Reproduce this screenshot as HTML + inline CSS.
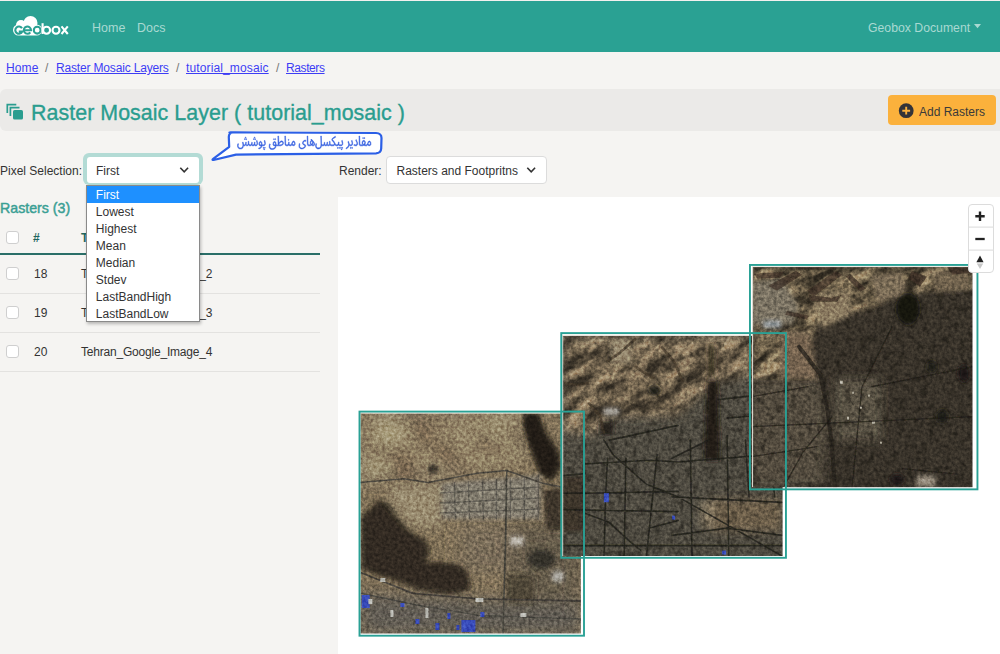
<!DOCTYPE html>
<html><head><meta charset="utf-8">
<style>
*{box-sizing:border-box;margin:0;padding:0}
html,body{width:1000px;height:654px;overflow:hidden;background:#f5f4f2;font-family:"Liberation Sans",sans-serif;font-size:12px;color:#333}
.abs{position:absolute}
#topline{left:0;top:0;width:1000px;height:1px;background:#f3f0ef}
#nav{left:0;top:1px;width:1000px;height:51px;background:#2aa193}
.navlink{color:#a9d9d2;font-size:12.5px;top:20.5px}
#crumb{top:61px;left:6px;font-size:12px;white-space:nowrap}
#crumb a{color:#3d3df5;text-decoration:underline}
#crumb .sep{color:#777;top:0}
#band{left:0;top:89px;width:1000px;height:42px;background:#ebeae8;border-radius:6px 0 0 6px}
#title{left:31px;top:100.5px;font-size:21.4px;letter-spacing:0.05px;color:#2a9d8f;white-space:nowrap;-webkit-text-stroke:0.35px #2a9d8f}
#addbtn{left:888px;top:95px;width:108px;height:30px;background:#fbb13c;border-radius:4px}
#addbtn span{position:absolute;left:31px;top:9.5px;font-size:12px;color:#3a3a3a}
.lbl{font-size:12px;color:#333;white-space:nowrap}
#sel1ring{left:83px;top:153px;width:120px;height:32px;border-radius:6px;background:#b3dbd5}
#sel1{left:87px;top:156.5px;width:112px;height:26px;background:#fff;border-radius:3px}
#sel2{left:386px;top:156px;width:161px;height:28px;background:#fff;border:1px solid #dcdcdc;border-radius:4px}
#map{left:338px;top:197px;width:662px;height:457px;background:#fff}
#rtitle{left:0;top:199.5px;font-size:14.2px;color:#3a9f94;white-space:nowrap;-webkit-text-stroke:0.45px #3a9f94}
.th{font-weight:bold;color:#1f6660}
.cb{width:13px;height:13px;border:1px solid #cfcfcf;border-radius:3px;background:#fff}
.rowb{left:0;width:320px;height:1px;background:#e3e2e0}
#dd{left:85.8px;top:185px;width:114px;height:137px;background:#fff;border:1px solid #8a8a8a;box-shadow:1px 2px 3px rgba(0,0,0,.25)}
#dd div{height:17px;line-height:19px;padding-left:9px;font-size:12px;color:#333}
#dd div.hl{background:#1e90ff;color:#fff}
#zc{left:968px;top:204px;width:26px;height:69px;background:#fff;border:1.5px solid #dcdcdc;border-radius:4px}
</style></head><body>
<div id="topline" class="abs"></div>
<div id="nav" class="abs"></div>
<svg class="abs" style="left:0;top:0" width="80" height="50" viewBox="0 0 80 50">
<g fill="#fff"><circle cx="30.5" cy="23" r="7"/><circle cx="21" cy="25" r="5"/><rect x="13" y="24.5" width="29" height="11" rx="5.5"/></g>
<g fill="none" stroke="#2aa193" stroke-width="2.1"><path d="M22 28.3 A3.6 3.6 0 1 0 22.2 31.5 L18.8 31.5"/><path d="M24.2 30.2 L31 30.2 A3.6 3.6 0 1 0 30.3 32.3"/><circle cx="37.2" cy="30.2" r="3.4"/></g>
<g fill="none" stroke="#fff" stroke-width="2.1"><path d="M42.6 23.2 V34"/><circle cx="46.6" cy="30.2" r="3.5"/><circle cx="56" cy="30.2" r="3.5"/><path d="M61.5 26.3 L67.8 34 M67.8 26.3 L61.5 34"/></g>
</svg>
<div class="abs navlink" style="left:92px">Home</div>
<div class="abs navlink" style="left:137px">Docs</div>
<div class="abs navlink" style="left:868px;font-size:12.25px">Geobox Document</div>
<svg class="abs" style="left:974px;top:24px" width="8" height="5"><path d="M0 0 L7 0 L3.5 4.2 Z" fill="#a9d9d2"/></svg>

<div id="crumb" class="abs">
<a class="abs" style="left:0px;top:0;letter-spacing:0.1px">Home</a><span class="abs sep" style="left:39px">/</span>
<a class="abs" style="left:50px;letter-spacing:-0.17px">Raster Mosaic Layers</a><span class="abs sep" style="left:170px">/</span>
<a class="abs" style="left:180px;letter-spacing:0.13px">tutorial_mosaic</a><span class="abs sep" style="left:270px">/</span>
<a class="abs" style="left:280px;letter-spacing:-0.4px">Rasters</a></div>

<div id="band" class="abs"></div>
<svg class="abs" style="left:0;top:95px" width="30" height="30" viewBox="0 95 30 30">
<g fill="none" stroke="#2a9d8f" stroke-width="1.7"><path d="M7.3 113 V104.6 H16.3"/><path d="M10.4 116 V107.6 H19.5"/></g>
<rect x="13" y="110" width="10" height="9.5" rx="1.6" fill="#2a9d8f"/>
</svg>
<div id="title" class="abs">Raster Mosaic Layer ( tutorial_mosaic )</div>
<div id="addbtn" class="abs"><span>Add Rasters</span></div>
<svg class="abs" style="left:896px;top:100px" width="22" height="22" viewBox="896 100 22 22"><circle cx="906.2" cy="110.7" r="7.4" fill="#333338"/><path d="M902.3 110.7 H910.1 M906.2 106.8 V114.6" stroke="#fbb13c" stroke-width="1.9"/></svg>

<div class="abs lbl" style="left:0;top:164px">Pixel Selection:</div>
<div id="sel1ring" class="abs"></div>
<div id="sel1" class="abs"><span class="abs" style="left:9px;top:7px">First</span></div>
<svg class="abs" style="left:176px;top:164px" width="16" height="12" viewBox="176 164 16 12"><path d="M180.3 167.8 L184.2 171.8 L188.1 167.8" fill="none" stroke="#333" stroke-width="1.6"/></svg>
<div class="abs lbl" style="left:339px;top:164px">Render:</div>
<div id="sel2" class="abs"><span class="abs" style="left:9.5px;top:7px">Rasters and Footpritns</span></div>
<svg class="abs" style="left:524px;top:164px" width="16" height="12" viewBox="524 164 16 12"><path d="M527.3 167.8 L531.2 171.8 L535.1 167.8" fill="none" stroke="#333" stroke-width="1.6"/></svg>

<div id="map" class="abs"></div>
<!--MAP-->
<svg class="abs" style="left:338px;top:197px" width="662" height="457" viewBox="338 197 662 457">
<defs>
<filter id="b1" x="-10%" y="-10%" width="120%" height="120%"><feGaussianBlur stdDeviation="0.7"/></filter>
<filter id="b2" x="-20%" y="-20%" width="140%" height="140%"><feGaussianBlur stdDeviation="2"/></filter>
<filter id="b4" x="-30%" y="-30%" width="160%" height="160%"><feGaussianBlur stdDeviation="4"/></filter>
<filter id="b8" x="-40%" y="-40%" width="180%" height="180%"><feGaussianBlur stdDeviation="8"/></filter>
<filter id="grain" x="0" y="0" width="100%" height="100%" color-interpolation-filters="sRGB"><feTurbulence type="fractalNoise" baseFrequency="0.32" numOctaves="3" seed="3"/><feColorMatrix type="matrix" values="1.5 0 0 0 -0.25  1.5 0 0 0 -0.25  1.5 0 0 0 -0.25  0 0 0 0 1"/></filter>
<filter id="blot" x="0" y="0" width="100%" height="100%" color-interpolation-filters="sRGB"><feTurbulence type="fractalNoise" baseFrequency="0.13" numOctaves="2" seed="13"/><feColorMatrix type="matrix" values="0 0 0 0 0.09  0 0 0 0 0.08  0 0 0 0 0.06  -5 0 0 0 2.35"/></filter>
<filter id="ridgeA" x="0" y="0" width="100%" height="100%" color-interpolation-filters="sRGB"><feTurbulence type="fractalNoise" baseFrequency="0.03 0.08" numOctaves="4" seed="7"/><feColorMatrix type="matrix" values="2.6 0 0 0 -0.8  2.6 0 0 0 -0.8  2.6 0 0 0 -0.8  0 0 0 0 1"/></filter>
<filter id="ridgeB" x="0" y="0" width="100%" height="100%" color-interpolation-filters="sRGB"><feTurbulence type="fractalNoise" baseFrequency="0.03 0.09" numOctaves="4" seed="21"/><feColorMatrix type="matrix" values="2.6 0 0 0 -0.8  2.6 0 0 0 -0.8  2.6 0 0 0 -0.8  0 0 0 0 1"/></filter>
<clipPath id="c0"><rect x="0" y="0" width="220.5" height="220.5"/></clipPath>
<mask id="m1"><polygon points="0,0 165,0 162,40 120,56 60,62 0,64" fill="#fff" filter="url(#b4)"/></mask>
<mask id="m2"><polygon points="0,0 221,0 221,40 190,40 155,48 116,80.6 84,82 47.3,82.5 30,100 0,96" fill="#fff" filter="url(#b4)"/></mask>
<mask id="m3"><polygon points="0,0 221,0 221,22 172.7,25.6 144,29 118,43.6 93.6,47 65,58 58,83 65,112 0,112" fill="#fff" filter="url(#b2)"/></mask>
</defs>
<g transform="translate(360.4 413)" clip-path="url(#c0)" style="isolation:isolate">
<rect x="0" y="0" width="221" height="221" fill="rgb(132,116,90)" />
<g filter="url(#b8)">
<polygon points="0,0 165,0 160,50 110,58 40,62 0,62" fill="rgb(145,128,100)" />
<polygon points="0,180 117,186 221,190 221,221 0,221" fill="rgb(100,95,86)" />
<polygon points="150,110 221,110 221,190 150,190" fill="rgb(105,95,78)" />
<polygon points="100,110 150,110 150,160 100,160" fill="rgb(125,112,92)" />
<g mask="url(#m1)" style="mix-blend-mode:overlay" opacity="0.45"><rect x="-60" y="-60" width="340" height="240" filter="url(#ridgeA)" transform="rotate(20 110 60)"/></g>
<rect width="221" height="221" filter="url(#blot)" opacity="0.25"/>
</g>
<g filter="url(#b2)">
<polygon points="164,0 178,0 185,19 197,37 201,52 192,68 180,62 172,42 166,26 162,8" fill="rgb(32,28,20)" />
<polygon points="183,77 202,75 202,117 186,117" fill="rgb(62,54,42)" />
<polygon points="1,104 18.2,87 29,89 35.3,99.8 48.1,117 65.3,127.7 69.5,138.4 65.3,149 80.2,149 97.4,151.2 108,159.8 110.2,176.9 91,181.2 58.8,176.9 37.4,168.3 16,161.9 1,155.5" fill="rgb(50,43,33)" />
<polygon points="80,70 180,62 180,106 80,106" fill="rgb(130,124,110)" />
<polygon points="30,72 80,72 80,115 50,112 30,90" fill="rgb(152,138,110)" filter="url(#b4)"/>
<ellipse cx="72.5" cy="56" rx="5" ry="4" fill="rgb(40,36,30)" />
<rect x="150" y="123.5" width="13" height="9" fill="rgb(195,190,180)" />
<polygon points="146,162 174,162 174,189 146,189" fill="rgb(80,70,56)" />
<ellipse cx="181" cy="146" rx="14" ry="10" fill="rgb(52,50,42)" />
<ellipse cx="197.5" cy="163.5" rx="6" ry="6" fill="rgb(175,172,165)" />
</g>
<g filter="url(#b1)">
<path d="M80 80 L180 74 M80 90 L180 85 M80 100 L180 96 M94 70 L95 106 M108 69 L109 106 M122 68 L123 106 M136 67 L136 106 M150 66 L150 106 M164 64 L164 106 M178 62 L178 106" fill="none" stroke="rgb(72,70,64)" stroke-width="1.3" stroke-linecap="round" stroke-linejoin="round" opacity="0.6"/>
<path d="M0 69.5 L43.5 65.8 L67.3 69.5 L116.9 60.3 L146.3 57.5 L183 70.4 L221 78" fill="none" stroke="rgb(72,68,60)" stroke-width="1.6" stroke-linecap="round" stroke-linejoin="round" />
<path d="M146.3 57.5 L145.4 117 L142.6 221" fill="none" stroke="rgb(70,68,60)" stroke-width="1.6" stroke-linecap="round" stroke-linejoin="round" />
<path d="M1.3 160 L52.6 180.4 L117.6 185.9 L221 188" fill="none" stroke="rgb(66,62,55)" stroke-width="1.8" stroke-linecap="round" stroke-linejoin="round" />
<path d="M1.3 180.4 L52.6 191.4 L117.6 202.4 L221 206" fill="none" stroke="rgb(72,70,64)" stroke-width="1.3" stroke-linecap="round" stroke-linejoin="round" />
</g>
<rect x="1.3" y="182" width="8" height="13" fill="rgb(55,75,185)" filter="url(#b1)"/>
<rect x="101" y="207" width="14" height="12" fill="rgb(55,75,185)" filter="url(#b1)"/>
<rect x="55" y="206" width="4" height="5" fill="rgb(55,75,185)" filter="url(#b1)"/>
<rect x="75" y="210" width="4" height="7" fill="rgb(55,75,185)" filter="url(#b1)"/>
<rect x="87" y="200" width="3" height="6" fill="rgb(55,75,185)" filter="url(#b1)"/>
<rect x="120" y="199" width="4" height="5" fill="rgb(55,75,185)" filter="url(#b1)"/>
<rect x="40" y="190" width="4" height="4" fill="rgb(55,75,185)" filter="url(#b1)"/>
<rect x="96" y="212" width="3" height="5" fill="rgb(55,75,185)" filter="url(#b1)"/>
<rect x="8" y="186" width="4" height="5" fill="rgb(185,185,178)" filter="url(#b1)"/>
<rect x="30" y="197" width="3" height="7" fill="rgb(185,185,178)" filter="url(#b1)"/>
<rect x="65" y="195" width="3" height="10" fill="rgb(185,185,178)" filter="url(#b1)"/>
<rect x="115" y="185" width="8" height="4" fill="rgb(185,185,178)" filter="url(#b1)"/>
<rect x="160" y="200" width="6" height="4" fill="rgb(185,185,178)" filter="url(#b1)"/>
<rect x="20" y="165" width="5" height="4" fill="rgb(185,185,178)" filter="url(#b1)"/>
<rect width="221" height="221" filter="url(#grain)" style="mix-blend-mode:overlay" opacity="0.32"/>
</g>
<g transform="translate(562.1 335.6)" clip-path="url(#c0)" style="isolation:isolate">
<rect x="0" y="0" width="221" height="221" fill="rgb(80,76,66)" />
<g filter="url(#b4)">
<polygon points="0,0 221,0 221,40 190,40 155,48 116,80.6 84,82 47.3,82.5 30,100 0,96" fill="rgb(112,98,78)" />
<polygon points="146.6,163 220,163 220,196 146.6,196" fill="rgb(110,96,76)" />
<polygon points="139,165 152,165 152,192 139,192" fill="rgb(135,122,100)" />
</g>
<g mask="url(#m2)" style="mix-blend-mode:overlay" opacity="0.5"><rect x="-60" y="-60" width="340" height="240" filter="url(#ridgeA)" transform="rotate(-35 110 60)"/></g>
<rect width="221" height="221" filter="url(#blot)" opacity="0.35"/>
<g filter="url(#b2)">
<polygon points="144.8,45 155.8,45 158,125 142,125" fill="rgb(32,28,22)" />
<polygon points="146.6,10 152.1,10 152.1,40.3 146.6,40.3" fill="rgb(55,48,36)" />
<polygon points="49,3.6 69,3.6 69,27.4 49,27.4" fill="rgb(150,136,110)" />
<polygon points="38,86 51,86 51,99 38,99" fill="rgb(40,36,30)" />
<rect x="41.8" y="73" width="14.7" height="5.8" fill="rgb(195,192,185)" />
<polygon points="0,141 21.6,141 21.6,196 0,196" fill="rgb(60,54,44)" />
<ellipse cx="92" cy="55" rx="6" ry="5" fill="rgb(30,28,24)" />
</g>
<g filter="url(#b1)">
<path d="M45.4 25.6 L56.5 18.3 L73 3.6 M73 31 L84 38.4 L91.3 42.1 M3.2 47.6 L14.2 49.4 L25.3 47.6 M27 67.8 L38.1 80.6 L41.8 97.2 M100 12 L112 26 L120 45" fill="none" stroke="rgb(66,54,40)" stroke-width="2.6" stroke-linecap="round" stroke-linejoin="round" opacity="0.7"/>
</g>
<g filter="url(#b1)">
<path d="M23.4 128.3 L87.6 124.6 L116 126.4 L221 118 M0 157.6 L23.4 157.6 L116 155.8 M41.8 104.4 L51 119 L84 148.4 L116 161.3 L221 221 M45.4 122.7 L43.6 159.4 L41.8 224 M63.8 122.7 L62 224 M95 119 L84 224 M23.4 177.8 L47.3 187 L69.3 207.2 L78.5 214.5 M0 174 L116 176 M21.6 100 L21.6 224 M87.6 192.5 L116 185 M109.9 161.3 L220 166.8 M109.9 199.8 L165 192.5 L220 199.8 M165 100 L166.8 224 M128.2 104.4 L130 224 M109.9 122.7 L146.6 104.4 M183.3 104.4 L187 161.3 M207 104.4 L212.6 161.3 M0 210 L221 210 M155.8 64 L187 60.5 M165 82.5 L187 80.6 M47.3 104.5 L116 89.8 M0 140 L23 138" fill="none" stroke="rgb(32,30,26)" stroke-width="1.6" stroke-linecap="round" stroke-linejoin="round" opacity="0.85"/>
</g>
<rect x="41.8" y="157.6" width="5" height="9" fill="rgb(55,75,185)" />
<rect x="160" y="215" width="4" height="4" fill="rgb(55,75,185)" />
<rect x="110" y="180" width="3" height="4" fill="rgb(55,75,185)" />
<rect width="221" height="221" filter="url(#grain)" style="mix-blend-mode:overlay" opacity="0.32"/>
</g>
<g transform="translate(752 266.7)" clip-path="url(#c0)" style="isolation:isolate">
<rect x="0" y="0" width="221" height="221" fill="rgb(58,52,43)" />
<g filter="url(#b4)">
<polygon points="0,112 65,112 75,150 70,221 0,221" fill="rgb(84,77,64)" />
<polygon points="83,112 130,112 130,173 83,173" fill="rgb(90,82,68)" />
</g>
<g filter="url(#b2)">
<polygon points="0,0 221,0 221,22 172.7,25.6 144,29 118,43.6 93.6,47 65,58 58,83 65,112 0,112" fill="rgb(108,94,73)" />
</g>
<g mask="url(#m3)" style="mix-blend-mode:overlay" opacity="0.55"><rect x="-60" y="-60" width="340" height="240" filter="url(#ridgeB)" transform="rotate(-30 110 60)"/></g>
<rect width="221" height="221" filter="url(#blot)" opacity="0.4"/>
<g filter="url(#b2)">
<polygon points="58,26 97,24 99,48 70,62" fill="rgb(138,122,96)" />
<polygon points="0,15 30,12 47,40 40,58 0,58" fill="rgb(122,114,98)" />
<polygon points="29,65 58,65 65,112 29,112" fill="rgb(116,100,80)" />
<polygon points="120,8 150,6 155,28 125,35" fill="rgb(122,108,86)" />
<polygon points="180,5 215,5 219,22 185,25" fill="rgb(112,98,78)" />
</g>
<g filter="url(#b1)" fill="rgb(55,44,33)" opacity="0.7">
<polygon points="16,19 44,4 50,8 25,24"/>
<polygon points="55,24 84,4 90,8 62,30"/>
<polygon points="56,28 79,31 90,28 85,35 60,35"/>
<polygon points="98,7 114,22 108,25 94,10"/>
<polygon points="2,7 32,5 28,11 5,12"/>
<polygon points="35,44 57,49 55,53 33,48"/>
<polygon points="44,0 84,0 84,3 44,3"/>
<polygon points="160,4 175,10 168,20 156,12"/>
<polygon points="195,0 221,0 221,6 200,8"/>
</g>
<g filter="url(#b2)">
<ellipse cx="156" cy="42" rx="12" ry="16" fill="rgb(24,22,17)" />
<ellipse cx="212" cy="107" rx="6" ry="9" fill="rgb(28,25,20)" />
<ellipse cx="180" cy="100" rx="5" ry="6" fill="rgb(30,27,22)" />
<ellipse cx="190" cy="150" rx="6" ry="7" fill="rgb(30,27,22)" />
<ellipse cx="145" cy="213" rx="7" ry="6" fill="rgb(28,25,20)" />
<rect x="165" y="209" width="18" height="11" fill="rgb(150,140,125)" />
<rect x="11" y="54" width="18" height="7" fill="rgb(150,158,162)" />
</g>
<path d="M47 80 L68.5 108 L75.6 144 L80 180 L83 221" fill="none" stroke="rgb(38,33,26)" stroke-width="4" stroke-linecap="round" stroke-linejoin="round" filter="url(#b1)" opacity="0.8"/>
<g filter="url(#b1)">
<path d="M32.7 218.4 L51 185.4 L80 150 M150 201.9 L205 207.4 M0 160 L221 150 M100 221 L110 120 L140 60 M221 100 L120 120 M0 130 L56 120 M0 190 L65 180" fill="none" stroke="rgb(28,26,22)" stroke-width="1.3" stroke-linecap="round" stroke-linejoin="round" opacity="0.7"/>
</g>
<rect x="88" y="114" width="3" height="3" fill="rgb(175,170,155)" filter="url(#b1)"/>
<rect x="116" y="128" width="2" height="2" fill="rgb(175,170,155)" filter="url(#b1)"/>
<rect x="120" y="155" width="3" height="2" fill="rgb(175,170,155)" filter="url(#b1)"/>
<rect x="95" y="150" width="2" height="3" fill="rgb(175,170,155)" filter="url(#b1)"/>
<rect x="108" y="140" width="2" height="2" fill="rgb(175,170,155)" filter="url(#b1)"/>
<rect x="128" y="175" width="2" height="2" fill="rgb(175,170,155)" filter="url(#b1)"/>
<rect x="100" y="125" width="2" height="2" fill="rgb(175,170,155)" filter="url(#b1)"/>
<rect width="221" height="221" filter="url(#grain)" style="mix-blend-mode:overlay" opacity="0.32"/>
</g>
<g fill="#f4efe6" opacity="0.85"><rect x="360.4" y="412.5" width="201.5" height="1.2"/><rect x="562.1" y="334.6" width="189.8" height="1.3"/><rect x="562.1" y="335" width="1.1" height="221"/><rect x="752" y="266" width="221" height="1.1"/><rect x="752" y="266" width="1.1" height="221"/></g>
<g fill="none" stroke="#2aa195" stroke-width="1.9">
<rect x="359.5" y="411.6" width="224.5" height="224.1"/>
<rect x="561.25" y="333.1" width="224.7" height="224.7"/>
<rect x="749.95" y="264.95" width="227.5" height="224.4"/>
</g>
</svg>
<!--/MAP-->
<svg class="abs" style="left:0;top:0" width="400" height="170" viewBox="0 0 400 170">
<path d="M229.5 132.6 Q229 132.4 235 132.4 L376 133 Q381.5 133.2 381.5 138 L381.2 148.5 Q381 153 376 153.3 L236 154.6 L213.5 160 Q211.5 160.2 213.5 158.6 L229.2 146.8 L228.8 137 Q228.8 132.6 233 132.5 Z" fill="#fff" stroke="#2b5fe6" stroke-width="2.2" stroke-linejoin="round"/>
<g transform="translate(237.5 136) scale(0.08547 0.11475)"><path fill="#3560e0" stroke="#3560e0" stroke-width="0.45" vector-effect="non-scaling-stroke" fill-rule="evenodd" d="M1217 111 1213 114 1213 119 1219 122 1223 119 1223 114ZM311 111 307 114 307 119 310 122 314 122 317 119 317 114ZM1339 98 1336 101 1336 106 1339 109 1343 109 1346 106 1346 101 1343 98ZM1323 98 1319 105 1321 108 1326 109 1329 107 1330 102 1328 99ZM1224 98 1221 101 1221 106 1227 109 1231 106 1231 101 1228 98ZM1208 98 1204 104 1207 108 1211 109 1214 107 1215 102 1213 99ZM1188 98 1184 104 1186 108 1191 109 1194 107 1195 102 1193 99ZM1169 100 1168 105 1170 108 1175 109 1179 103 1175 98ZM319 98 315 101 315 105 321 109 326 103 324 99ZM302 98 299 101 299 106 305 109 309 106 309 101 306 98ZM1341 38 1333 41 1338 57 1339 70 1332 77 1316 77 1312 75 1299 46 1291 50 1299 68 1299 78 1296 86 1287 96 1269 105 1272 113 1292 103 1300 95 1307 81 1314 86 1327 86 1338 83 1344 78 1347 71 1347 58ZM321 38 312 41 319 66 318 72 311 77 289 77 286 58 276 47 266 46 255 54 250 66 251 78 260 85 278 87 270 97 259 102 247 104 249 113 261 111 274 105 281 99 288 86 312 85 324 77 327 62ZM266 55 273 56 278 62 280 69 279 77 266 77 260 74 259 64ZM235 58 229 38 221 42 227 61 227 71 223 76 207 76 204 73 206 54 198 53 195 69 188 77 177 77 172 73 174 56 166 54 162 70 157 76 144 77 135 69 132 46 124 46 125 71 119 77 105 76 102 72 104 54 96 53 91 73 86 77 78 77 72 73 66 53 57 55 62 73 62 88 53 100 42 104 28 104 16 100 11 95 8 86 12 68 6 66 3 68 0 79 0 92 5 102 16 110 26 113 47 112 57 108 64 102 72 83 78 86 87 86 97 79 107 86 121 85 130 76 136 83 143 86 158 85 167 78 172 84 177 86 192 85 199 79 204 84 210 86 224 85 234 75ZM803 40 794 36 779 38 766 48 761 57 760 64 762 69 767 74 788 84 788 89 782 96 763 104 746 104 737 101 730 95 727 89 730 68 723 65 719 76 718 89 724 103 732 109 747 113 768 112 787 103 796 93 798 81 793 76 773 67 769 63 769 59 782 46 793 45 799 47ZM1389 30 1382 36 1395 56 1397 70 1387 77 1376 77 1364 73 1360 81 1375 86 1393 85 1400 81 1405 74 1405 58ZM597 28 593 30 592 35 594 38 599 39 603 33ZM442 22 438 24 437 30 444 33 448 27ZM425 22 420 28 424 33 427 33 431 30 431 26ZM207 22 203 24 202 29 204 32 209 33 212 31 213 26ZM191 22 186 25 186 30 193 33 197 28ZM102 22 98 24 97 29 99 32 104 33 107 31 108 26ZM86 22 81 25 81 30 88 33 92 28ZM1484 12 1480 15 1480 20 1483 23 1487 23 1490 20 1490 15ZM1468 12 1463 16 1465 22 1470 23 1473 21 1474 16ZM198 9 195 11 194 16 196 19 201 20 205 14 203 10ZM93 9 90 11 89 16 91 19 96 20 100 14 98 10ZM1421 0 1423 64 1425 76 1430 83 1439 86 1463 86 1478 82 1498 86 1512 86 1523 78 1535 84 1550 85 1560 77 1562 70 1561 59 1552 46 1544 43 1537 44 1529 50 1519 70 1513 76 1490 77 1497 62 1497 55 1493 45 1481 37 1467 40 1458 52 1457 61 1459 68 1465 75 1464 77 1438 76 1433 70 1430 0ZM1540 52 1546 53 1553 61 1554 70 1548 76 1536 75 1527 70 1534 57ZM1480 46 1487 53 1488 62 1476 74 1467 65 1466 57 1473 47ZM913 89 917 100 927 109 938 113 953 113 970 107 980 96 985 82 993 86 1003 86 1010 84 1016 78 1023 85 1037 86 1045 83 1048 79 1055 85 1068 86 1077 82 1081 76 1086 82 1094 86 1118 86 1128 84 1139 76 1143 81 1155 86 1174 85 1182 79 1190 85 1212 86 1221 84 1230 77 1233 62 1226 38 1218 41 1225 66 1224 72 1220 76 1195 77 1187 72 1189 54 1181 52 1178 68 1173 75 1156 77 1149 74 1130 48 1111 31 1118 25 1149 10 1144 2 1113 18 1103 28 1104 36 1130 62 1132 71 1128 75 1121 77 1092 76 1085 67 1083 46 1075 46 1076 71 1069 77 1059 77 1053 73 1055 54 1047 53 1044 69 1037 77 1026 77 1021 73 1023 56 1015 54 1011 70 1006 76 994 77 986 71 984 65 982 0 973 0 976 78 972 92 964 100 957 103 936 103 930 100 923 92 922 80 925 68 918 65 914 76ZM814 0 817 72 822 82 832 86 847 86 868 81 876 85 890 86 901 80 903 66 899 58 886 44 864 27 858 33 863 38 855 43 850 54 852 67 858 75 851 77 831 76 826 69 823 0ZM886 57 894 68 894 74 891 77 877 76ZM870 45 875 49 877 58 874 65 867 71 860 64 858 54 864 46ZM553 0 555 67 557 77 562 83 571 86 586 86 593 84 600 78 608 85 625 86 637 78 649 84 663 85 673 77 675 72 674 58 664 45 658 43 647 46 639 55 630 73 624 77 607 75 604 71 606 54 598 52 594 70 589 76 572 77 568 75 564 66 562 0ZM653 52 661 54 667 63 667 71 662 76 649 75 641 70 644 62ZM537 55 529 45 515 42 498 48 484 60 481 0 472 0 474 72 469 78 454 77 448 55 440 48 430 47 424 50 417 58 414 75 422 84 443 87 441 94 435 101 416 109 400 109 388 105 383 101 379 93 379 84 384 71 378 68 375 69 371 79 370 98 380 112 392 117 414 118 425 116 438 110 446 102 453 86 504 86 528 79 537 68ZM427 58 435 56 441 61 444 70 443 77 430 77 423 73 423 65ZM529 59 528 68 520 74 506 77 481 77 491 64 509 52 523 52Z"/></g>
</svg>

<div id="rtitle" class="abs">Rasters (3)</div>

<div class="abs cb" style="left:6px;top:231px"></div>
<div class="abs th" style="left:33px;top:231px;font-size:12px">#</div>
<div class="abs th" style="left:81px;top:231px;font-size:12px">Title</div>
<div class="abs" style="left:0;top:253px;width:320px;height:2px;background:#2a6e68"></div>
<div class="abs cb" style="left:6px;top:267px"></div>
<div class="abs lbl" style="left:34px;top:267px">18</div>
<div class="abs lbl" style="left:81px;top:267px;letter-spacing:-0.2px">Tehran_Google_Image_2</div>
<div class="abs rowb" style="top:293px"></div>
<div class="abs cb" style="left:6px;top:306px"></div>
<div class="abs lbl" style="left:34px;top:306px">19</div>
<div class="abs lbl" style="left:81px;top:306px;letter-spacing:-0.2px">Tehran_Google_Image_3</div>
<div class="abs rowb" style="top:332px"></div>
<div class="abs cb" style="left:6px;top:345px"></div>
<div class="abs lbl" style="left:34px;top:345px">20</div>
<div class="abs lbl" style="left:81px;top:345px;letter-spacing:-0.2px">Tehran_Google_Image_4</div>
<div class="abs rowb" style="top:371px"></div>
<div id="dd" class="abs"><div class="hl">First</div><div>Lowest</div><div>Highest</div><div>Mean</div><div>Median</div><div>Stdev</div><div>LastBandHigh</div><div>LastBandLow</div></div>
<div id="zc" class="abs"></div>
<svg class="abs" style="left:966px;top:202px" width="30" height="73" viewBox="966 202 30 73">
<path d="M969 227.2 H993.5 M969 250.2 H993.5" stroke="#e2e2e2" stroke-width="1.2"/>
<path d="M975.3 216.2 H984.7 M980 211.5 V220.9" stroke="#222" stroke-width="2.4"/>
<path d="M975.3 239 H984.7" stroke="#222" stroke-width="2.3"/>
<path d="M980 255.5 L983.6 262.3 H976.4 Z" fill="#222"/>
<path d="M980 269 L983.2 263.4 H976.8 Z" fill="#c8c8c8"/>
</svg>
</body></html>
